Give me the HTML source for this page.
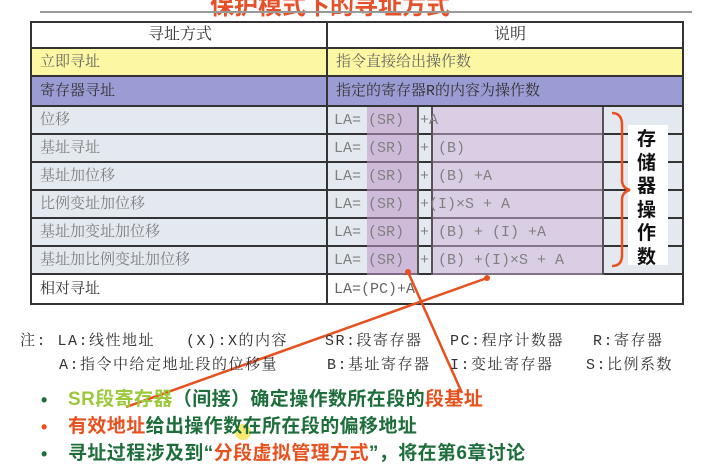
<!DOCTYPE html><html><head><meta charset="utf-8"><style>
body{margin:0;width:709px;height:466px;background:#fff;position:relative;overflow:hidden;font-family:"Liberation Sans","Noto Sans CJK SC",sans-serif}
.a{position:absolute}
.r{position:absolute;left:31px;width:652px;border-bottom:2px solid #333;box-sizing:border-box}
.t{position:absolute;font-size:15px;color:#808080;line-height:26px;white-space:nowrap;font-family:"Liberation Mono","Noto Serif CJK SC",serif}
.f{position:absolute;font-size:15px;color:#808080;line-height:26px;white-space:nowrap;font-family:"Liberation Mono","Noto Serif CJK SC",serif}
.n{position:absolute;font-size:15px;letter-spacing:1.5px;color:#333;white-space:nowrap;font-family:"Liberation Mono","Noto Serif CJK SC",serif}
.b{position:absolute;left:68px;font-size:19px;letter-spacing:0.4px;font-weight:bold;color:#1e6e3c;white-space:nowrap;line-height:22px}
.d{position:absolute;left:41px;font-size:18px;font-weight:bold;line-height:22px}
.v{position:absolute;width:2px;background:#555;top:107px;height:168px}
</style></head><body>
<div class="a" style="left:0;top:-14px;width:660px;text-align:center;font-size:24px;font-weight:bold;color:#e8502a">保护模式下的寻址方式</div>
<div class="a" style="left:40px;top:11px;width:652px;height:2px;background:#999"></div>
<div class="r" style="top:21px;height:28px;background:#fff;border-top:2px solid #333"></div>
<div class="r" style="top:49px;height:28px;background:#fbf7a2"></div>
<div class="r" style="top:77px;height:30px;background:#9c9cd4"></div>
<div class="r" style="top:107px;height:28px;background:#e3e9ef"></div>
<div class="r" style="top:135px;height:28px;background:#e3e9ef"></div>
<div class="r" style="top:163px;height:28px;background:#e3e9ef"></div>
<div class="r" style="top:191px;height:28px;background:#e3e9ef"></div>
<div class="r" style="top:219px;height:28px;background:#e3e9ef"></div>
<div class="r" style="top:247px;height:28px;background:#e3e9ef"></div>
<div class="r" style="top:275px;height:30px;background:#fff"></div>
<div class="a" style="left:367px;top:107px;width:51px;height:168px;background:rgba(190,150,200,.55)"></div>
<div class="a" style="left:432px;top:107px;width:171px;height:168px;background:rgba(210,180,220,.5)"></div>
<div class="v" style="left:417px"></div><div class="v" style="left:431px"></div><div class="v" style="left:602px"></div>
<div class="a" style="left:628px;top:125px;width:40px;height:140px;background:#fff"></div>
<div class="a" style="left:30px;top:21px;width:2px;height:284px;background:#333"></div>
<div class="a" style="left:682px;top:21px;width:2px;height:284px;background:#333"></div>
<div class="a" style="left:326px;top:21px;width:2px;height:284px;background:#333"></div>
<div class="t" style="left:110px;top:22px;color:#333;width:140px;text-align:center;font-size:16px">寻址方式</div>
<div class="t" style="left:460px;top:22px;color:#333;width:100px;text-align:center;font-size:16px">说明</div>
<div class="t" style="left:40px;top:50px;color:#666">立即寻址</div>
<div class="t" style="left:336px;top:50px;color:#666">指令直接给出操作数</div>
<div class="t" style="left:40px;top:79px;color:#333">寄存器寻址</div>
<div class="t" style="left:336px;top:79px;color:#333">指定的寄存器R的内容为操作数</div>
<div class="t" style="left:40px;top:108px">位移</div>
<div class="t" style="left:40px;top:136px">基址寻址</div>
<div class="t" style="left:40px;top:164px">基址加位移</div>
<div class="t" style="left:40px;top:192px">比例变址加位移</div>
<div class="t" style="left:40px;top:220px">基址加变址加位移</div>
<div class="t" style="left:40px;top:248px">基址加比例变址加位移</div>
<div class="t" style="left:40px;top:277px;color:#333">相对寻址</div>
<div class="f" style="left:334px;top:108px">LA=</div><div class="f" style="left:368px;top:108px">(SR)</div><div class="f" style="left:420px;top:108px">+A</div>
<div class="f" style="left:334px;top:136px">LA=</div><div class="f" style="left:368px;top:136px">(SR)</div><div class="f" style="left:420px;top:136px">+ (B)</div>
<div class="f" style="left:334px;top:164px">LA=</div><div class="f" style="left:368px;top:164px">(SR)</div><div class="f" style="left:420px;top:164px">+ (B) +A</div>
<div class="f" style="left:334px;top:192px">LA=</div><div class="f" style="left:368px;top:192px">(SR)</div><div class="f" style="left:420px;top:192px">+(I)×S  +  A</div>
<div class="f" style="left:334px;top:220px">LA=</div><div class="f" style="left:368px;top:220px">(SR)</div><div class="f" style="left:420px;top:220px">+ (B) + (I) +A</div>
<div class="f" style="left:334px;top:248px">LA=</div><div class="f" style="left:368px;top:248px">(SR)</div><div class="f" style="left:420px;top:248px">+ (B) +(I)×S + A</div>
<div class="f" style="left:334px;top:277px;color:#666">LA=(PC)+A</div>
<div class="a" style="left:637px;top:128px;width:24px;font-size:19px;font-weight:bold;line-height:23.5px;color:#111">存储器操作数</div>
<svg class="a" style="left:0;top:0" width="709" height="466">
<path d="M612 113 Q622 113 622 125 L622 180 Q622 188 630 190 Q622 192 622 200 L622 255 Q622 266 612 266" fill="none" stroke="#e8501e" stroke-width="2.5"/>
<line x1="408" y1="272" x2="462" y2="393" stroke="#e8501e" stroke-width="2.5"/>
<line x1="487" y1="278" x2="126" y2="407" stroke="#e8501e" stroke-width="2.5"/>
<circle cx="408" cy="272" r="3" fill="#e8501e"/><circle cx="487" cy="278" r="3" fill="#e8501e"/>
<circle cx="243" cy="432" r="8" fill="#f8e030" opacity=".7"/>
</svg>
<div class="n" style="left:20px;top:329px">注: LA:线性地址</div>
<div class="n" style="left:186px;top:329px">(X):X的内容</div>
<div class="n" style="left:325px;top:329px">SR:段寄存器</div>
<div class="n" style="left:450px;top:329px">PC:程序计数器</div>
<div class="n" style="left:593px;top:329px">R:寄存器</div>
<div class="n" style="left:59px;top:353px">A:指令中给定地址段的位移量</div>
<div class="n" style="left:327px;top:353px">B:基址寄存器</div>
<div class="n" style="left:450px;top:353px">I:变址寄存器</div>
<div class="n" style="left:586px;top:353px">S:比例系数</div>
<div class="d" style="top:389px;color:#1e6e3c">•</div>
<div class="d" style="top:416px;color:#e8501e">•</div>
<div class="d" style="top:443px;color:#1e6e3c">•</div>
<div class="b" style="top:389px"><span style="color:#9cc83c">SR段寄存器</span>（间接）确定操作数所在段的<span style="color:#e8501e">段基址</span></div>
<div class="b" style="top:416px"><span style="color:#e8501e">有效地址</span>给出操作数在所在段的偏移地址</div>
<div class="b" style="top:443px">寻址过程涉及到“<span style="color:#e8501e">分段虚拟管理方式</span>”，将在第6章讨论</div>
</body></html>
